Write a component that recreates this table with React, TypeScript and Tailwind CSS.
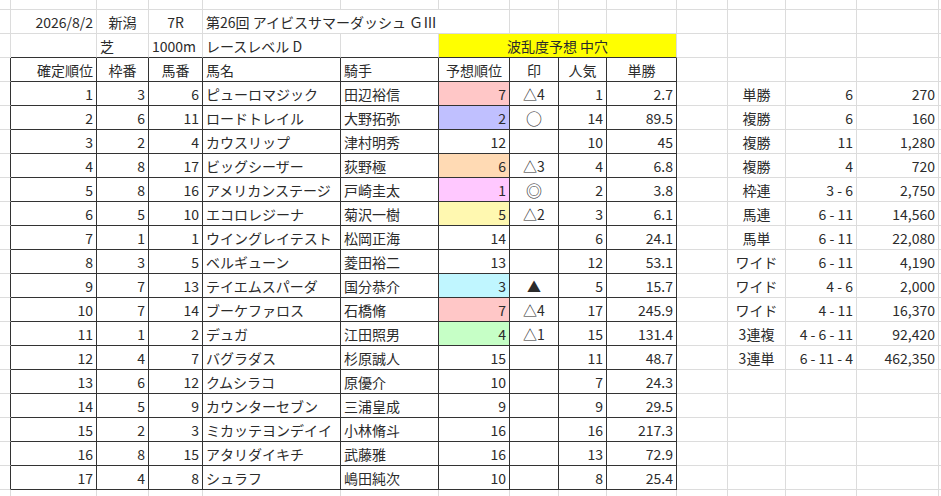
import React from 'react';

type Cell = { text?: string; align?: 'l' | 'c' | 'r'; bg?: string; span?: number; big?: boolean };

// 出走馬データ: 確定順位, 枠番, 馬番, 馬名, 騎手, 予想順位, 予想セル色, 印, 人気, 単勝
const horses: [number, number, number, string, string, number, string, string, number, string][] = [
  [1, 3, 6, 'ピューロマジック', '田辺裕信', 7, 'bg-[#ffc7c7]', '△4', 1, '2.7'],
  [2, 6, 11, 'ロードトレイル', '大野拓弥', 2, 'bg-[#c0c0ff]', '○', 14, '89.5'],
  [3, 2, 4, 'カウスリップ', '津村明秀', 12, '', '', 10, '45'],
  [4, 8, 17, 'ビッグシーザー', '荻野極', 6, 'bg-[#ffdab4]', '△3', 4, '6.8'],
  [5, 8, 16, 'アメリカンステージ', '戸崎圭太', 1, 'bg-[#ffc8ff]', '◎', 2, '3.8'],
  [6, 5, 10, 'エコロレジーナ', '菊沢一樹', 5, 'bg-[#fff8b0]', '△2', 3, '6.1'],
  [7, 1, 1, 'ウイングレイテスト', '松岡正海', 14, '', '', 6, '24.1'],
  [8, 3, 5, 'ベルギューン', '菱田裕二', 13, '', '', 12, '53.1'],
  [9, 7, 13, 'テイエムスパーダ', '国分恭介', 3, 'bg-[#c0f6ff]', '▲', 5, '15.7'],
  [10, 7, 14, 'ブーケファロス', '石橋脩', 7, 'bg-[#ffc7c7]', '△4', 17, '245.9'],
  [11, 1, 2, 'デュガ', '江田照男', 4, 'bg-[#c6ffc6]', '△1', 15, '131.4'],
  [12, 4, 7, 'バグラダス', '杉原誠人', 15, '', '', 11, '48.7'],
  [13, 6, 12, 'クムシラコ', '原優介', 10, '', '', 7, '24.3'],
  [14, 5, 9, 'カウンターセブン', '三浦皇成', 9, '', '', 9, '29.5'],
  [15, 2, 3, 'ミカッテヨンデイイ', '小林脩斗', 16, '', '', 16, '217.3'],
  [16, 8, 15, 'アタリダイキチ', '武藤雅', 16, '', '', 13, '72.9'],
  [17, 4, 8, 'シュラフ', '嶋田純次', 10, '', '', 8, '25.4'],
];

// 払戻金
const payouts: [string, string, string][] = [
  ['単勝', '6', '270'],
  ['複勝', '6', '160'],
  ['複勝', '11', '1,280'],
  ['複勝', '4', '720'],
  ['枠連', '3 - 6', '2,750'],
  ['馬連', '6 - 11', '14,560'],
  ['馬単', '6 - 11', '22,080'],
  ['ワイド', '6 - 11', '4,190'],
  ['ワイド', '4 - 6', '2,000'],
  ['ワイド', '4 - 11', '16,370'],
  ['3連複', '4 - 6 - 11', '92,420'],
  ['3連単', '6 - 11 - 4', '462,350'],
];

const ROWS = 22;
const COLS = 15;

const buildSheet = () => {
  const sheet: Record<number, Record<number, Cell>> = {};
  for (let r = 0; r < ROWS; r++) sheet[r] = {};

  sheet[1] = {
    1: { text: '2026/8/2', align: 'r' },
    2: { text: '新潟', align: 'c' },
    3: { text: '7R', align: 'c' },
    4: { text: '第26回 アイビスサマーダッシュ ＧⅢ', align: 'l', span: 3 },
  };
  sheet[2] = {
    2: { text: '芝', align: 'l' },
    3: { text: '1000m', align: 'l' },
    4: { text: 'レースレベル D', align: 'l' },
    6: { text: '波乱度予想 中穴', align: 'c', bg: 'bg-[#ffff00]', span: 4 },
  };
  sheet[3] = {
    1: { text: '確定順位', align: 'r' },
    2: { text: '枠番', align: 'c' },
    3: { text: '馬番', align: 'c' },
    4: { text: '馬名', align: 'l' },
    5: { text: '騎手', align: 'l' },
    6: { text: '予想順位', align: 'c' },
    7: { text: '印', align: 'c' },
    8: { text: '人気', align: 'c' },
    9: { text: '単勝', align: 'c' },
  };

  horses.forEach((h, i) => {
    const r = 4 + i;
    sheet[r] = {
      1: { text: String(h[0]), align: 'r' },
      2: { text: String(h[1]), align: 'r' },
      3: { text: String(h[2]), align: 'r' },
      4: { text: h[3], align: 'l' },
      5: { text: h[4], align: 'l' },
      6: { text: String(h[5]), align: 'r', bg: h[6] },
      7: { text: h[7], align: 'c', big: h[7] === '○' || h[7] === '◎' },
      8: { text: String(h[8]), align: 'r' },
      9: { text: h[9], align: 'r' },
    };
  });

  payouts.forEach((p, i) => {
    const r = 4 + i;
    sheet[r][11] = { text: p[0], align: 'c' };
    sheet[r][12] = { text: p[1], align: 'r' };
    sheet[r][13] = { text: p[2], align: 'r' };
  });

  return sheet;
};

const spanClass: Record<number, string> = {
  1: '',
  2: 'col-span-2',
  3: 'col-span-3',
  4: 'col-span-4',
};

const alignClass = { l: 'justify-start', c: 'justify-center', r: 'justify-end' };

const App: React.FC = () => {
  const sheet = buildSheet();
  const cells: React.ReactNode[] = [];

  for (let r = 0; r < ROWS; r++) {
    let c = 0;
    while (c < COLS) {
      const cell = sheet[r][c] || {};
      const span = cell.span || 1;
      const last = c + span - 1;
      // 表の罫線 (B〜J列, 見出し〜17行目)
      const rightDark = r >= 3 && r <= 20 && last <= 9;
      const bottomDark = r >= 2 && r <= 20 && c >= 1 && last <= 9;
      cells.push(
        <div
          key={`${r}-${c}`}
          className={`flex items-center px-[3px] whitespace-nowrap overflow-hidden border-r border-b ${
            rightDark ? 'border-r-[#333]' : 'border-r-[#dcdcdc]'
          } ${bottomDark ? 'border-b-[#333]' : 'border-b-[#dcdcdc]'} ${spanClass[span]} ${
            alignClass[cell.align || 'l']
          } ${cell.bg || 'bg-white'} ${cell.big ? 'text-[16px]' : ''}`}
        >
          {cell.text}
        </div>
      );
      c += span;
    }
  }

  return (
    <div className="w-[941px] h-[496px] overflow-hidden bg-white text-[14px] leading-none text-[#2b2b2b] font-['Noto_Sans_CJK_JP','Noto_Sans',sans-serif]">
      <div className="grid grid-cols-[11px_86px_52px_54px_138px_98px_71px_49px_48px_70px_51px_58px_71px_82px_1fr] grid-rows-[10px_repeat(20,24px)_24px]">
        {cells}
      </div>
    </div>
  );
};

export default App;
